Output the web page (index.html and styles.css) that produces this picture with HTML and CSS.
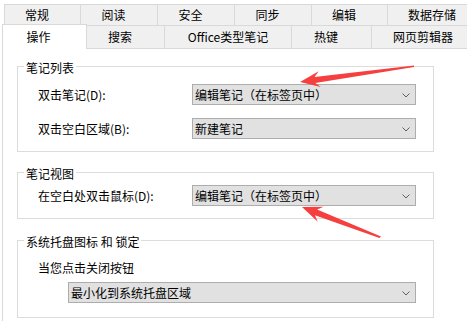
FILE: index.html
```html
<!DOCTYPE html>
<html>
<head>
  <title>选项</title>
  <link rel="stylesheet" href="styles.css">
</head>
<body>
  <div class="tabs">
    <div class="tab-row back">
      <div class="tab w77 first">常规</div>
      <div class="tab w77">阅读</div>
      <div class="tab w77">安全</div>
      <div class="tab w77">同步</div>
      <div class="tab w76">编辑</div>
      <div class="tab wide">数据存储</div>
    </div>
    <div class="tab-row front">
      <div class="tab active first">操作</div>
      <div class="tab w78">搜索</div>
      <div class="tab office">Office类型笔记</div>
      <div class="tab w80">热键</div>
      <div class="tab wide">网页剪辑器</div>
    </div>
  </div>

  <div class="page">
    <fieldset class="group group-list">
      <legend>笔记列表</legend>
      <div class="fields">
        <label>双击笔记(D):</label>
        <div class="combo"><span>编辑笔记（在标签页中）</span><svg width="8" height="5" viewBox="0 0 8 5"><path d="M0.5 0.5 L4 4 L7.5 0.5" fill="none" stroke="#606060" stroke-width="1"/></svg></div>
        <label>双击空白区域(B):</label>
        <div class="combo"><span>新建笔记</span><svg width="8" height="5" viewBox="0 0 8 5"><path d="M0.5 0.5 L4 4 L7.5 0.5" fill="none" stroke="#606060" stroke-width="1"/></svg></div>
      </div>
    </fieldset>

    <fieldset class="group group-view">
      <legend>笔记视图</legend>
      <div class="fields">
        <label>在空白处双击鼠标(D):</label>
        <div class="combo"><span>编辑笔记（在标签页中）</span><svg width="8" height="5" viewBox="0 0 8 5"><path d="M0.5 0.5 L4 4 L7.5 0.5" fill="none" stroke="#606060" stroke-width="1"/></svg></div>
      </div>
    </fieldset>

    <fieldset class="group group-tray">
      <legend>系统托盘图标 和 锁定</legend>
      <div class="stack">
        <label>当您点击关闭按钮</label>
        <div class="combo long"><span>最小化到系统托盘区域</span><svg width="8" height="5" viewBox="0 0 8 5"><path d="M0.5 0.5 L4 4 L7.5 0.5" fill="none" stroke="#606060" stroke-width="1"/></svg></div>
      </div>
    </fieldset>
  </div>

  <!-- annotation arrows drawn over the dialog -->
  <svg class="arrows" width="467" height="321" viewBox="0 0 467 321">
    <polygon fill="#f5403f" points="414,65.5 414,67 315.3,82.9 320.9,87.1 300,82 318.7,71.3 314.5,76.9"/>
    <polygon fill="#f5403f" points="381,236.5 379.5,238 314.9,215.2 317.8,221.7 302,207 323.6,206.7 317.1,209.6"/>
  </svg>
</body>
</html>
```

FILE: styles.css
```css
html, body {
  overflow: hidden;
}

body {
  margin: 0;
  padding: 0;
  width: 467px;
  height: 321px;
  position: relative;
  display: flex;
  flex-direction: column;
  background-color: #fff;
  color: #000;
  font-family: "Noto Sans CJK SC", "Liberation Sans", sans-serif;
  font-size: 12px;
  line-height: 16px;
}

/* tab strip */
.tabs {
  padding-top: 4px;
}

.tab-row {
  display: flex;
}

.tab-row.back {
  margin-left: 4px;
  height: 22px;
}

.tab-row.front {
  margin-left: 2px;
  height: 22px;
}

.tab {
  box-sizing: border-box;
  flex: none;
  display: flex;
  align-items: center;
  justify-content: center;
  padding-right: 11px;
  background-color: #f0f0f0;
  border-right: 1px solid #d9d9d9;
  white-space: nowrap;
  overflow: hidden;
}

.tab.first {
  border-left: 1px solid #d9d9d9;
}

.back .tab {
  border-top: 1px solid #d9d9d9;
  border-bottom: 1px solid #d9d9d9;
}

.w76 { width: 76px; }
.w77 { width: 77px; }
.w78 { width: 78px; }
.w80 { width: 80px; }

.tab.wide {
  flex: 1;
  justify-content: flex-start;
  padding: 0 0 0 20px;
  border-right: none;
}

.front .tab.wide {
  padding-left: 21px;
}

.tab.office {
  width: 127px;
  padding-right: 0;
}

.tab.active {
  position: relative;
  z-index: 1;
  width: 85px;
  height: 25px;
  margin-top: -2px;
  margin-bottom: -1px;
  padding-right: 12px;
  background-color: #fff;
  border-top: 1px solid #d9d9d9;
}

/* tab page */
.page {
  flex: 1;
  margin-left: 2px;
  padding-left: 14px;
  border-left: 1px solid #d9d9d9;
  border-top: 1px solid #d9d9d9;
  overflow: hidden;
}

.group {
  box-sizing: border-box;
  width: 417px;
  margin: 0;
  border: 1px solid #dcdcdc;
  padding: 10px 0 12px 6px;
  min-inline-size: 0;
}

.group legend {
  padding: 4px 2px 0;
  line-height: 12px;
}

.group-list {
  margin-top: 9px;
}

.group-view {
  margin-top: 12px;
  padding-top: 5px;
  padding-bottom: 12px;
}

.group-tray {
  margin-top: 13px;
  padding-top: 12px;
  padding-bottom: 14px;
}

.fields {
  display: grid;
  grid-template-columns: 154px 224px;
  row-gap: 13px;
  align-items: center;
  margin-left: 14px;
}

.fields label {
  padding-top: 1px;
}

.stack {
  margin-left: 14px;
}

.stack label {
  display: block;
}

.combo {
  box-sizing: border-box;
  display: flex;
  align-items: center;
  justify-content: space-between;
  height: 21px;
  padding: 1px 5px 0 2px;
  background-color: #e1e1e1;
  border: 1px solid #adadad;
  white-space: nowrap;
}

.combo svg {
  display: block;
}

.combo.long {
  width: 348px;
  margin: 6px 0 0 30px;
}

.arrows {
  position: absolute;
  left: 0;
  top: 0;
  z-index: 5;
  pointer-events: none;
}
```
